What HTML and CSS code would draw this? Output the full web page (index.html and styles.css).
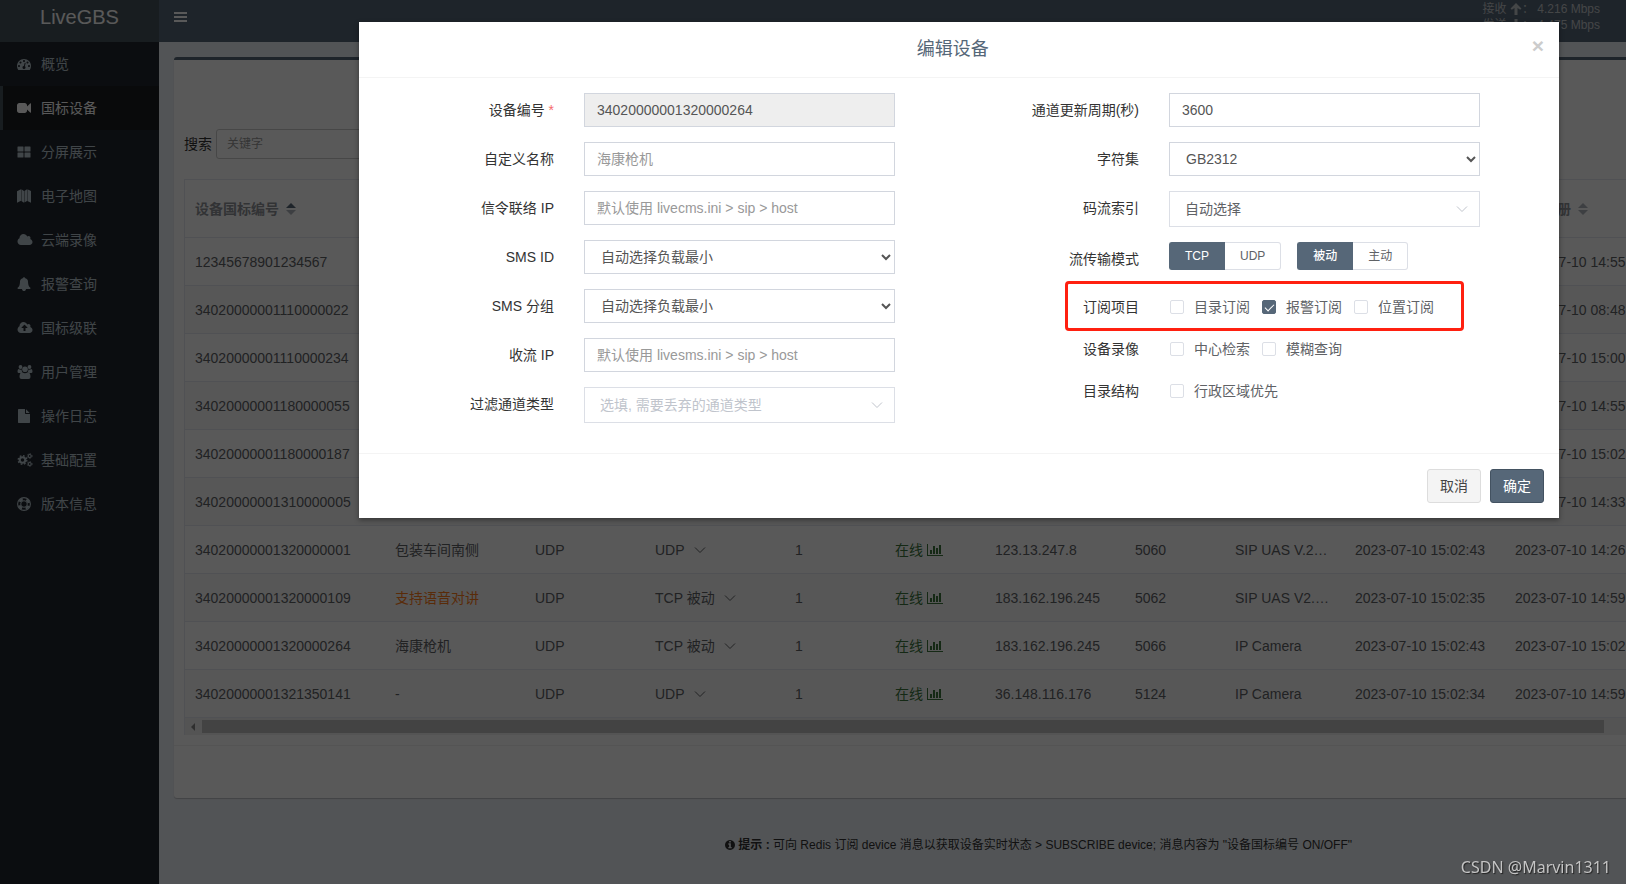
FILE: index.html
```html
<!DOCTYPE html>
<html lang="zh-CN">
<head>
<meta charset="utf-8">
<title>LiveGBS</title>
<link rel="stylesheet" href="styles.css">
</head>
<body>
<svg class="sprite" aria-hidden="true">
  <symbol id="i-dash" viewBox="0 0 1792 1792"><path d="M384 1152q0-53-37.500-90.500t-90.500-37.500-90.500 37.500-37.500 90.500 37.500 90.500 90.500 37.500 90.500-37.500 37.500-90.500zm192-448q0-53-37.500-90.500t-90.500-37.500-90.500 37.500-37.500 90.500 37.500 90.500 90.500 37.500 90.500-37.500 37.500-90.500zm428 481l101-382q6-26-7.500-48.500t-38.500-29.500-48 6.500-30 39.500l-101 382q-60 5-107 43.500t-63 98.500q-20 77 20 146t117 89 146-20 89-117q16-60-6-117t-72-91zm660-33q0-53-37.500-90.500t-90.500-37.500-90.500 37.500-37.500 90.500 37.500 90.500 90.500 37.500 90.500-37.500 37.500-90.500zm-640-640q0-53-37.500-90.500t-90.500-37.500-90.500 37.500-37.500 90.500 37.500 90.500 90.500 37.500 90.500-37.500 37.500-90.500zm448 192q0-53-37.500-90.500t-90.500-37.500-90.500 37.500-37.500 90.500 37.500 90.500 90.500 37.500 90.500-37.500 37.500-90.500zm320 448q0 261-141 483-19 29-54 29h-1402q-35 0-54-29-141-221-141-483 0-182 71-348t191-286 286-191 348-71 348 71 286 191 191 286 71 348z"/></symbol>
  <symbol id="i-video" viewBox="0 0 1792 1792"><path d="M1792 352v1088q0 42-39 59-13 5-25 5-27 0-45-19l-403-403v166q0 119-84.500 203.500t-203.500 84.500h-704q-119 0-203.500-84.500t-84.500-203.500v-704q0-119 84.500-203.500t203.500-84.500h704q119 0 203.500 84.500t84.500 203.500v165l403-402q18-19 45-19 12 0 25 5 39 17 39 59z"/></symbol>
  <symbol id="i-grid" viewBox="0 0 14 14"><path d="M1 1.500h5q.5 0 .5.500v4q0 .5-.5.500h-5q-.5 0-.5-.5v-4q0-.5.5-.5zM8 1.500h5q.5 0 .5.500v4q0 .5-.5.500h-5q-.5 0-.5-.5v-4q0-.5.5-.5zM1 7.500h5q.5 0 .5.500v4q0 .5-.5.500h-5q-.5 0-.5-.5v-4q0-.5.5-.5zM8 7.500h5q.5 0 .5.500v4q0 .5-.5.500h-5q-.5 0-.5-.5v-4q0-.5.5-.5z"/></symbol>
  <symbol id="i-map" viewBox="0 0 14 14"><path d="M0 2.200L4 .2v11.600L0 13.800zM4.400.2L7 2v11.800L4.400 12zM7.400 2L10 .3v11.600l-2.600 1.700zM10.400.3L14 2v11.800l-3.600-1.900z"/></symbol>
  <symbol id="i-cloud" viewBox="0 0 2048 1792"><path d="M1984 1152q0 159-112.500 271.500t-271.500 112.500h-1088q-185 0-316.500-131.500t-131.500-316.500q0-132 71-241.500t187-163.500q-2-28-2-43 0-212 150-362t362-150q158 0 286.500 88t187.500 230q70-62 166-62 106 0 181 75t75 181q0 75-41 138 129 30 213 134.500t84 239.500z"/></symbol>
  <symbol id="i-bell" viewBox="0 0 1792 1792"><path d="M1728 1408q0 52-38 90t-90 38h-448q0 106-75 181t-181 75-181-75-75-181h-448q-52 0-90-38t-38-90q50-42 91-88t85-119.500 74.500-158.500 50-206 19.500-260q0-152 117-282.500t307-158.500q-8-19-8-39 0-40 28-68t68-28 68 28 28 68q0 20-8 39 190 28 307 158.500t117 282.500q0 139 19.500 260t50 206 74.500 158.500 85 119.500 91 88z"/></symbol>
  <symbol id="i-upload" viewBox="0 0 2048 1792"><path d="M1344 864q0-14-9-23l-352-352q-9-9-23-9t-23 9l-351 351q-10 12-10 24 0 14 9 23t23 9h224v352q0 13 9.500 22.500t22.500 9.500h192q13 0 22.500-9.500t9.500-22.500v-352h224q13 0 22.500-9.500t9.500-22.500zm640 288q0 159-112.500 271.500t-271.500 112.500h-1088q-185 0-316.500-131.500t-131.500-316.500q0-130 70-240t188-165q-2-30-2-43 0-212 150-362t362-150q156 0 285.500 87t188.500 231q71-62 166-62 106 0 181 75t75 181q0 76-41 138 130 31 213.500 135.500t83.500 238.500z"/></symbol>
  <symbol id="i-users" viewBox="0 0 15 14"><circle cx="3" cy="2" r="1.900"/><circle cx="12" cy="2" r="1.900"/><circle cx="7.500" cy="4.300" r="2.800"/><path d="M0 6.500Q0 4 1.200 4q1.500 1 2.900.4-.1 1.700.9 2.800-1.200 0-2 .8H1.400Q0 8 0 6.500zM15 6.500Q15 4 13.800 4q-1.500 1-2.900.4.100 1.700-.9 2.800 1.200 0 2 .8h1.600Q15 8 15 6.500zM2 12Q2 7.500 4.800 7.300q2.700 1.800 5.400 0Q13 7.500 13 12q0 2-2 2H4q-2 0-2-2z"/></symbol>
  <symbol id="i-file" viewBox="0 0 1792 1792"><path d="M1152 512v-472q22 14 36 28l408 408q14 14 28 36h-472zm-128 32q0 40 28 68t68 28h544v1056q0 40-28 68t-68 28h-1344q-40 0-68-28t-28-68v-1600q0-40 28-68t68-28h800v544z"/></symbol>
  <symbol id="i-cogs" viewBox="0 0 15 14"><g fill="none" stroke="currentColor"><circle cx="5" cy="7" r="2.800" stroke-width="2"/><circle cx="5" cy="7" r="4.300" stroke-width="1.400" stroke-dasharray="1.690"/><circle cx="12.200" cy="3" r="1.500" stroke-width="1.100"/><circle cx="12.200" cy="3" r="2.400" stroke-width=".8" stroke-dasharray="1.260"/><circle cx="12.200" cy="11" r="1.500" stroke-width="1.100"/><circle cx="12.200" cy="11" r="2.400" stroke-width=".8" stroke-dasharray="1.260"/></g></symbol>
  <symbol id="i-ring" viewBox="0 0 14 14"><g fill="none" stroke="currentColor"><circle cx="7" cy="7" r="6.400" stroke-width="1.100"/><circle cx="7" cy="7" r="3.300" stroke-width="1"/><circle cx="7" cy="7" r="4.900" stroke-width="2.600" stroke-dasharray="3.850" stroke-dashoffset="-1.920"/></g></symbol>
  <symbol id="i-chart" viewBox="0 0 2048 1792"><path d="M640 896v512h-256v-512h256zm384-512v1024h-256v-1024h256zm1024 1152v128h-2048v-1536h128v1408h1920zm-640-896v768h-256v-768h256zm384-384v1152h-256v-1152h256z"/></symbol>
  <symbol id="i-info" viewBox="0 0 1536 1536"><path transform="translate(-128 -128)" d="M1152 1376v-160q0-14-9-23t-23-9h-96v-512q0-14-9-23t-23-9h-320q-14 0-23 9t-9 23v160q0 14 9 23t23 9h96v320h-96q-14 0-23 9t-9 23v160q0 14 9 23t23 9h448q14 0 23-9t9-23zm-128-896v-160q0-14-9-23t-23-9h-192q-14 0-23 9t-9 23v160q0 14 9 23t23 9h192q14 0 23-9t9-23zm640 416q0 209-103 385.500t-279.500 279.500-385.500 103-385.500-103-279.500-279.500-103-385.500 103-385.500 279.500-279.500 385.500-103 385.500 103 279.500 279.500 103 385.500z"/></symbol>
  <symbol id="i-down" viewBox="0 0 12 12"><path d="M1 3.500l5 5 5-5" fill="none" stroke="currentColor"/></symbol>
  <symbol id="i-sort" viewBox="0 0 10 12"><path class="sort-up" d="M0 5L5 0l5 5z"/><path d="M0 7l5 5 5-5z"/></symbol>
  <symbol id="i-up" viewBox="0 0 12 12"><path d="M6 0l5.500 5.500-1.300 1.300L7.500 5v7h-3V5L1.800 6.800.5 5.500z"/></symbol>
</svg>

<div class="page">
  <aside class="sidebar">
    <a class="logo" href="#">LiveGBS</a>
    <nav class="menu">
      <a href="#"><svg><use href="#i-dash"/></svg>概览</a>
      <a href="#" class="active"><svg><use href="#i-video"/></svg>国标设备</a>
      <a href="#"><svg><use href="#i-grid"/></svg>分屏展示</a>
      <a href="#"><svg><use href="#i-map"/></svg>电子地图</a>
      <a href="#"><svg class="wide"><use href="#i-cloud"/></svg>云端录像</a>
      <a href="#"><svg><use href="#i-bell"/></svg>报警查询</a>
      <a href="#"><svg class="wide"><use href="#i-upload"/></svg>国标级联</a>
      <a href="#"><svg class="wide"><use href="#i-users"/></svg>用户管理</a>
      <a href="#"><svg><use href="#i-file"/></svg>操作日志</a>
      <a href="#"><svg class="wide"><use href="#i-cogs"/></svg>基础配置</a>
      <a href="#"><svg><use href="#i-ring"/></svg>版本信息</a>
    </nav>
  </aside>

  <div class="main">
    <header class="topbar">
      <button class="burger" type="button" aria-label="菜单"><i></i><i></i><i></i></button>
      <div class="rates">
        <span>接收 <svg><use href="#i-up"/></svg>： 4.216 Mbps</span>
        <span>发送 <svg class="flip"><use href="#i-up"/></svg>： 4.475 Mbps</span>
      </div>
    </header>

    <section class="box">
      <div class="search">
        <label for="kw">搜索</label>
        <input id="kw" type="text" placeholder="关键字">
      </div>
      <div class="table-wrap">
        <table>
          <colgroup><col class="w200"><col class="w140"><col class="w120"><col class="w140"><col class="w100"><col class="w100"><col class="w140"><col class="w100"><col class="w120"><col class="w160"><col class="w160"><col></colgroup>
          <thead><tr><th><span class="th asc">设备国标编号 <svg><use href="#i-sort"/></svg></span></th><th colspan="9"></th><th><span class="th">最近注册 <svg><use href="#i-sort"/></svg></span></th><th></th></tr></thead>
          <tbody>
            <tr><td>12345678901234567</td><td colspan="9"></td><td>2023-07-10 14:55</td><td></td></tr>
            <tr><td>34020000001110000022</td><td colspan="9"></td><td>2023-07-10 08:48</td><td></td></tr>
            <tr><td>34020000001110000234</td><td colspan="9"></td><td>2023-07-10 15:00</td><td></td></tr>
            <tr><td>34020000001180000055</td><td colspan="9"></td><td>2023-07-10 14:55</td><td></td></tr>
            <tr><td>34020000001180000187</td><td colspan="9"></td><td>2023-07-10 15:02</td><td></td></tr>
            <tr><td>34020000001310000005</td><td colspan="9"></td><td>2023-07-10 14:33</td><td></td></tr>
            <tr><td>34020000001320000001</td><td>包装车间南侧</td><td>UDP</td><td><span class="drop">UDP <svg><use href="#i-down"/></svg></span></td><td>1</td><td><span class="online">在线 <svg><use href="#i-chart"/></svg></span></td><td>123.13.247.8</td><td>5060</td><td>SIP UAS V.2…</td><td>2023-07-10 15:02:43</td><td>2023-07-10 14:26</td><td></td></tr>
            <tr><td>34020000001320000109</td><td class="talk">支持语音对讲</td><td>UDP</td><td><span class="drop">TCP 被动 <svg><use href="#i-down"/></svg></span></td><td>1</td><td><span class="online">在线 <svg><use href="#i-chart"/></svg></span></td><td>183.162.196.245</td><td>5062</td><td>SIP UAS V2.…</td><td>2023-07-10 15:02:35</td><td>2023-07-10 14:59</td><td></td></tr>
            <tr><td>34020000001320000264</td><td>海康枪机</td><td>UDP</td><td><span class="drop">TCP 被动 <svg><use href="#i-down"/></svg></span></td><td>1</td><td><span class="online">在线 <svg><use href="#i-chart"/></svg></span></td><td>183.162.196.245</td><td>5066</td><td>IP Camera</td><td>2023-07-10 15:02:43</td><td>2023-07-10 15:02</td><td></td></tr>
            <tr><td>34020000001321350141</td><td>-</td><td>UDP</td><td><span class="drop">UDP <svg><use href="#i-down"/></svg></span></td><td>1</td><td><span class="online">在线 <svg><use href="#i-chart"/></svg></span></td><td>36.148.116.176</td><td>5124</td><td>IP Camera</td><td>2023-07-10 15:02:34</td><td>2023-07-10 14:59</td><td></td></tr>
          </tbody>
        </table>
        <div class="hscroll"><span class="arrow"></span><span class="thumb"></span></div>
      </div>
      <div class="box-footer"></div>
    </section>

    <footer class="hint"><svg><use href="#i-info"/></svg> <b>提示 :</b> 可向 Redis 订阅 device 消息以获取设备实时状态 &gt; SUBSCRIBE device; 消息内容为 "设备国标编号 ON/OFF"</footer>
  </div>

  <div class="overlay">
    <form class="modal" role="dialog" aria-labelledby="title">
      <div class="modal-header">
        <h4 id="title">编辑设备</h4>
        <button class="close" type="button" aria-label="关闭">×</button>
      </div>
      <div class="modal-body">
        <div class="col">
          <div class="row"><label for="f1">设备编号 <span class="req">*</span></label><input class="ctl" id="f1" type="text" value="34020000001320000264" disabled></div>
          <div class="row"><label for="f2">自定义名称</label><input class="ctl" id="f2" type="text" placeholder="海康枪机"></div>
          <div class="row"><label for="f3">信令联络 IP</label><input class="ctl" id="f3" type="text" placeholder="默认使用 livecms.ini &gt; sip &gt; host"></div>
          <div class="row"><label for="f4">SMS ID</label><select class="ctl" id="f4"><option>自动选择负载最小</option></select></div>
          <div class="row"><label for="f5">SMS 分组</label><select class="ctl" id="f5"><option>自动选择负载最小</option></select></div>
          <div class="row"><label for="f6">收流 IP</label><input class="ctl" id="f6" type="text" placeholder="默认使用 livesms.ini &gt; sip &gt; host"></div>
          <div class="row"><label for="f7">过滤通道类型</label><div class="pick"><select class="empty" id="f7"><option>选填, 需要丢弃的通道类型</option></select><svg><use href="#i-down"/></svg></div></div>
        </div>
        <div class="col">
          <div class="row"><label for="g1">通道更新周期(秒)</label><input class="ctl" id="g1" type="text" value="3600"></div>
          <div class="row"><label for="g2">字符集</label><select class="ctl" id="g2"><option>GB2312</option></select></div>
          <div class="row"><label for="g3">码流索引</label><div class="pick"><select id="g3"><option>自动选择</option></select><svg><use href="#i-down"/></svg></div></div>
          <div class="row modes"><span class="label">流传输模式</span>
            <div class="groups">
              <div class="seg"><label><input type="radio" name="proto" checked><span>TCP</span></label><label><input type="radio" name="proto"><span>UDP</span></label></div>
              <div class="seg"><label><input type="radio" name="dir" checked><span>被动</span></label><label><input type="radio" name="dir"><span>主动</span></label></div>
            </div>
          </div>
          <div class="row marked"><span class="label">订阅项目</span><div class="checks"><label><input type="checkbox">目录订阅</label><label><input type="checkbox" checked>报警订阅</label><label><input type="checkbox">位置订阅</label></div></div>
          <div class="row"><span class="label">设备录像</span><div class="checks"><label><input type="checkbox">中心检索</label><label><input type="checkbox">模糊查询</label></div></div>
          <div class="row"><span class="label">目录结构</span><div class="checks"><label><input type="checkbox">行政区域优先</label></div></div>
        </div>
      </div>
      <div class="modal-footer">
        <button class="btn" type="button">取消</button>
        <button class="btn primary" type="button">确定</button>
      </div>
    </form>
  </div>
</div>
<div class="watermark">CSDN @Marvin1311</div>
</body>
</html>
```

FILE: styles.css
```css
* { box-sizing: border-box; }
html { overflow: hidden; }
body {
  margin: 0;
  overflow: hidden;
  font: 14px/20px "Liberation Sans", "Noto Sans CJK SC", sans-serif;
  color: #333;
}
a { text-decoration: none; color: inherit; }
button, input, select { font: inherit; }
svg { fill: currentColor; flex: none; }
.sprite { position: absolute; width: 0; height: 0; }

.page {
  position: relative;
  display: flex;
  min-width: 1918px;
  min-height: 100vh;
  background: #ecf0f5;
}

/* Sidebar */
.sidebar { width: 159px; flex: none; background: #222630; }
.logo {
  display: block;
  height: 42px;
  line-height: 34px;
  font-size: 20px;
  text-align: center;
  color: #fff;
  background: #47555c;
}
.menu a {
  display: flex;
  align-items: center;
  height: 44px;
  padding-left: 14px;
  border-left: 3px solid transparent;
  color: #b8c7ce;
}
.menu svg { width: 14px; height: 14px; margin-right: 10px; }
.menu svg.wide { width: 16px; margin-right: 8px; }
.menu .active { color: #fff; background: #1a1d20; border-color: #47555c; }

/* Top bar */
.main { flex: 1; min-width: 0; }
.topbar {
  display: flex;
  justify-content: space-between;
  align-items: flex-start;
  height: 42px;
  padding: 0 318px 0 15px;
  background: #566778;
}
.burger {
  display: grid;
  gap: 2px;
  margin-top: 12px;
  padding: 0;
  border: 0;
  background: none;
}
.burger i { width: 13px; height: 2px; background: #fff; }
.rates {
  display: grid;
  padding-top: 1px;
  font-size: 12px;
  line-height: 16px;
  color: #c4c8cc;
}
.rates span { display: flex; align-items: center; white-space: pre; }
.rates svg { width: 12px; height: 12px; }
.flip { transform: rotate(180deg); }

/* Device list */
.box {
  margin: 15px 15px 0;
  border-top: 3px solid #566778;
  border-radius: 3px;
  background: #fff;
  box-shadow: 0 1px 1px rgba(0, 0, 0, .2);
}
.search { display: flex; align-items: center; gap: 4px; padding: 69px 10px 20px; }
.search input {
  width: 200px;
  height: 30px;
  padding: 5px 10px;
  font-size: 12px;
  border: 1px solid #ccc;
  border-radius: 3px;
}
.search input::placeholder { color: #999; }
.table-wrap { margin: 0 10px; border: 1px solid #e6e9ef; border-bottom: 0; overflow: hidden; }
table { width: 100%; table-layout: fixed; border-collapse: separate; border-spacing: 0; color: #606266; }
th, td { padding: 0 10px; text-align: left; white-space: nowrap; border-bottom: 1px solid #e6e9ef; }
th { height: 58px; color: #909399; }
td { height: 48px; }
tbody tr:nth-child(even) { background: #fafafa; }
.w100 { width: 100px; }
.w120 { width: 120px; }
.w140 { width: 140px; }
.w160 { width: 160px; }
.w200 { width: 200px; }
.th, .drop, .online { display: flex; align-items: center; }
.th { gap: 7px; }
.th svg { width: 10px; height: 12px; color: #b0b4bc; }
.asc svg { --up: #566778; }
.sort-up { fill: var(--up, currentColor); }
.drop { gap: 9px; }
.drop svg { width: 12px; height: 12px; }
.online { gap: 4px; color: #3c763d; }
.online svg { width: 16px; height: 14px; }
.talk { color: #ff7d1a; }
.hscroll { display: flex; align-items: center; gap: 7px; height: 17px; padding-left: 6px; background: #f1f1f1; }
.arrow { border: 4px solid transparent; border-left: 0; border-right-color: #888; }
.thumb { flex: none; width: 1402px; height: 13px; background: #c1c1c1; }
.box-footer { height: 53px; margin-top: 10px; border-top: 1px solid #f0f0f0; }
.hint { padding: 37px 0 28px; text-align: center; font-size: 12px; color: #333; }
.hint svg { width: 10px; height: 10px; vertical-align: -1px; }

/* Dialog */
.overlay {
  position: absolute;
  inset: 0;
  padding-top: 22px;
  background: rgba(0, 0, 0, .65);
}
.modal { width: 1200px; margin: 0 auto; background: #fff; box-shadow: 0 2px 5px rgba(0, 0, 0, .4); }
.modal-header {
  display: flex;
  align-items: flex-start;
  padding: 15px;
  border-bottom: 1px solid #f4f4f4;
}
.modal-header h4 { flex: 1; margin: 0; text-align: center; font-size: 18px; line-height: 25px; font-weight: normal; color: #566778; }
.close {
  padding: 0;
  border: 0;
  background: none;
  font-size: 21px;
  line-height: 17px;
  font-weight: bold;
  color: #ccc;
}
.modal-body { display: grid; grid-template-columns: 1fr 1fr; padding: 15px 15px 30px; }
.col { display: grid; gap: 15px; align-content: start; }
.row { display: grid; grid-template-columns: 4fr 7fr 1fr; align-items: start; position: relative; }
.row > label, .label { padding: 7px 15px 0; text-align: right; }
.req { color: #f56c6c; }
.ctl, .pick, .groups, .checks { margin: 0 15px; }
.ctl {
  height: 34px;
  min-width: 0;
  padding: 6px 12px;
  border: 1px solid #d2d6de;
  border-radius: 0;
  background: #fff;
  color: #555;
}
.ctl:disabled { background: #eee; }
.ctl::placeholder { color: #999; }
.pick { display: grid; align-items: center; grid-template-columns: 1fr 29px; }
.pick select {
  grid-area: 1 / 1 / 2 / 3;
  appearance: none;
  height: 36px;
  padding: 0 15px;
  border: 1px solid #dcdfe6;
  border-radius: 0;
  background: #fff;
  color: #606266;
}
.pick .empty { color: #c0c4cc; }
.pick svg { grid-area: 1 / 2; width: 12px; height: 12px; margin-left: 5px; color: #c0c4cc; pointer-events: none; }
.modes { min-height: 33px; }
.groups { display: flex; gap: 16px; }
.seg { display: flex; font-size: 12px; line-height: 26px; color: #606266; }
.seg input { position: absolute; opacity: 0; }
.seg span { display: block; padding: 0 15px; border: 1px solid #dcdfe6; }
.seg label:first-child span { border-radius: 3px 0 0 3px; border-right: 0; padding-right: 16px; }
.seg label:last-child span { border-radius: 0 3px 3px 0; border-left: 0; }
.seg input:checked + span { color: #fff; font-weight: 500; background: #566778; border-color: #566778; }
.checks { display: flex; gap: 12px; padding: 7px 1px 0; color: #606266; white-space: nowrap; }
.checks label { display: flex; align-items: center; gap: 10px; }
.checks input {
  appearance: none;
  display: grid;
  place-items: center;
  width: 14px;
  height: 14px;
  margin: 0;
  border: 1px solid #dcdfe6;
  border-radius: 2px;
  background: #fff;
}
.checks input:checked { background: #566778; border-color: #566778; }
.checks input:checked::after {
  content: "";
  width: 4px;
  height: 8px;
  margin-bottom: 2px;
  border: solid #fff;
  border-width: 0 1px 1px 0;
  transform: rotate(45deg);
}
.marked::after {
  content: "";
  position: absolute;
  inset: -9px 80px -14px 106px;
  border: 3px solid #ff2010;
  border-radius: 4px;
  pointer-events: none;
}
.modal-footer {
  display: flex;
  justify-content: flex-end;
  gap: 9px;
  padding: 15px;
  border-top: 1px solid #f4f4f4;
}
.btn {
  height: 34px;
  padding: 0 12px;
  border: 1px solid #ddd;
  border-radius: 3px;
  background: #f4f4f4;
  color: #444;
}
.primary { background: #566778; border-color: #435261; color: #fff; }

.watermark {
  position: fixed;
  right: 15px;
  bottom: 6px;
  font: 16px/22px "Noto Sans", sans-serif;
  color: #c4c4c4;
  text-shadow: 1px 1px 1px #222;
}
```
